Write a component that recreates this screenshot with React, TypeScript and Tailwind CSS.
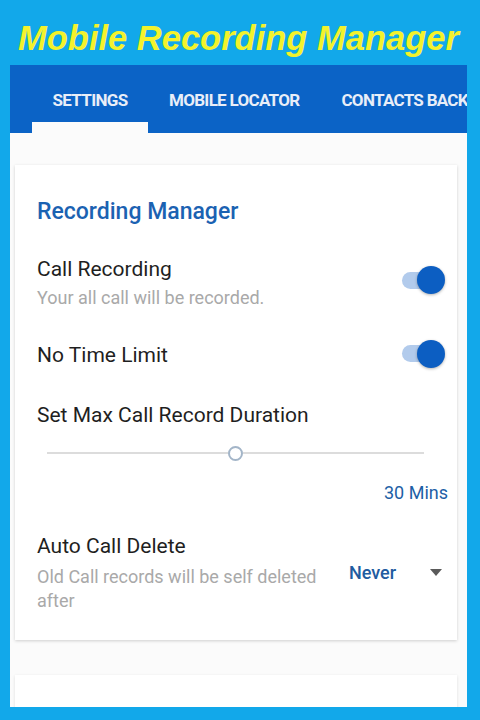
import React from "react";

const tabs = [
  { id: "settings", label: "SETTINGS" },
  { id: "locator", label: "MOBILE LOCATOR" },
  { id: "contacts", label: "CONTACTS BACK" },
];

const Toggle = ({ on }: { on: boolean }) => (
  <div className="flex items-center">
    <div className={`w-[36px] h-[17px] rounded-full ${on ? "bg-[#b2cbec]" : "bg-gray-300"}`} />
    <div
      className={`w-[28px] h-[28px] -ml-[21px] rounded-full shadow-[0_1px_3px_rgba(0,0,0,0.3)] ${
        on ? "bg-[#0c5ec2]" : "bg-gray-100"
      }`}
    />
  </div>
);

const App = () => {
  const activeTab = "settings";

  return (
    <div className="w-[480px] h-[720px] bg-[#12a8ea] flex flex-col overflow-hidden">
      <div className="h-[65px] shrink-0 pt-[21px] pl-[18px]">
        <h1 className="text-[34.5px] leading-[34px] font-bold italic text-[#f3f22c] font-['Liberation_Sans',Arial,sans-serif] whitespace-nowrap">
          Mobile Recording Manager
        </h1>
      </div>

      <div className="ml-[10px] mr-[13px] mb-[13px] flex-1 bg-[#fbfbfb] flex flex-col overflow-hidden font-['Roboto',sans-serif]">
        {/* tab bar */}
        <div className="h-[68px] shrink-0 bg-[#0b63c6] flex pl-[22px] overflow-hidden whitespace-nowrap">
          {tabs.map((tab, i) => (
            <div
              key={tab.id}
              className={`flex flex-col items-center pt-[25px] shrink-0 ${i === 0 ? "w-[116px]" : "px-[21px]"}`}
            >
              <span className="text-[17px] leading-[20px] font-bold tracking-[-0.7px] text-[#e8eef8]">
                {tab.label}
              </span>
              <div
                className={`mt-[12px] h-[11px] self-stretch ${activeTab === tab.id ? "bg-[#fbfbfb]" : ""}`}
              />
            </div>
          ))}
        </div>

        {/* settings card */}
        <div className="mt-[32px] ml-[5px] mr-[10px] bg-white shadow-[0_1px_3px_rgba(0,0,0,0.18)] pl-[22px] pr-[9px] pt-[33px] pb-[27px] shrink-0">
          <h2 className="text-[23px] leading-[28px] font-medium text-[#1b62b2]">Recording Manager</h2>

          <div className="mt-[31px] flex items-center">
            <div className="flex-1">
              <div className="text-[21px] leading-[25px] text-[#1f1f1f]">Call Recording</div>
              <div className="mt-[5px] text-[18px] leading-[22px] text-[#a9a9a9]">
                Your all call will be recorded.
              </div>
            </div>
            <div className="mr-[3px] -mt-[6px]">
              <Toggle on />
            </div>
          </div>

          <div className="mt-[34px] flex items-center">
            <div className="flex-1 text-[21px] leading-[25px] text-[#1f1f1f]">No Time Limit</div>
            <div className="mr-[3px] -mt-[4px]">
              <Toggle on />
            </div>
          </div>

          <div className="mt-[35px] text-[21px] leading-[25px] text-[#1f1f1f]">Set Max Call Record Duration</div>

          <div className="mt-[17px] ml-[10px] w-[377px] h-[16px] flex items-center">
            <div className="w-[181px] h-[2px] bg-[#dcdcdc]" />
            <div className="w-[15px] h-[15px] rounded-full border-2 border-[#a3b5c8] bg-white shrink-0" />
            <div className="flex-1 h-[2px] bg-[#dcdcdc]" />
          </div>

          <div className="mt-[21px] text-right text-[18px] leading-[22px] text-[#1d5fa6]">30 Mins</div>

          <div className="mt-[30px] flex items-center">
            <div className="w-[300px] shrink-0">
              <div className="text-[21px] leading-[25px] text-[#1f1f1f]">Auto Call Delete</div>
              <div className="mt-[6px] text-[18px] leading-[24px] text-[#a9a9a9]">
                Old Call records will be self deleted after
              </div>
            </div>
            <div className="flex-1 flex items-center ml-[12px] -mt-[2px]">
              <span className="text-[18px] leading-[22px] font-medium text-[#215ba0]">Never</span>
              <svg className="ml-auto mr-[6px]" width="12" height="7" viewBox="0 0 12 7">
                <path d="M0 0 L12 0 L6 7 Z" fill="#5a5a5a" />
              </svg>
            </div>
          </div>
        </div>

        {/* next card, cut off */}
        <div className="mt-[35px] ml-[5px] mr-[10px] h-[80px] bg-white shadow-[0_1px_3px_rgba(0,0,0,0.12)] shrink-0" />
      </div>
    </div>
  );
};

export default App;
